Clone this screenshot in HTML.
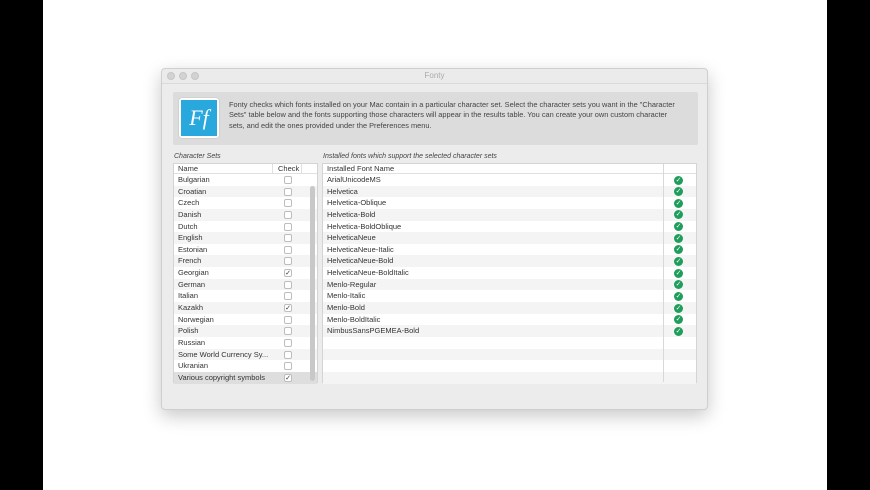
<!DOCTYPE html>
<html><head><style>
*{margin:0;padding:0;box-sizing:border-box}
body{width:870px;height:490px;background:#000;position:relative;overflow:hidden;font-family:"Liberation Sans",sans-serif;font-size:7.5px;color:#333}
#page{position:absolute;left:43px;top:0;width:784px;height:490px;background:#fff}
.win{position:absolute;left:161px;top:68px;width:547px;height:342px;background:#ececec;border:1px solid #cfcfcf;border-radius:4px;box-shadow:0 6px 18px rgba(0,0,0,.22)}
.tb{position:absolute;left:0;top:0;width:100%;height:15px;border-bottom:1px solid #dadada;background:#ebebeb;border-radius:4px 4px 0 0}
.tb .d{position:absolute;top:3px;width:8px;height:8px;border-radius:50%;background:#d2d2d2;border:1px solid #c6c6c6}
.tb .t{position:absolute;left:0;right:0;top:2px;text-align:center;color:#aaa;font-size:8px}
.info{position:absolute;left:11px;top:23px;width:525px;height:53px;background:#dcdcdc;border-radius:2px}
.icon{position:absolute;left:6px;top:6px;width:40px;height:40px;background:#fff;border-radius:3px;box-shadow:0 0 1px #999}
.icon div{position:absolute;left:2px;top:2px;width:36px;height:36px;background:#29a8dd;color:#fff;font-family:"Liberation Serif",serif;font-style:italic;font-size:22px;text-align:center;line-height:36px}
.info p{position:absolute;left:56px;top:8px;width:450px;font-size:7.4px;line-height:10.3px;color:#444}
.lbl{position:absolute;top:84px;font-style:italic;font-size:7px;color:#444}
.tbl{position:absolute;top:94px;background:#fff;border:1px solid #d4d4d4}
.row{height:11.65px;line-height:11.65px;padding-left:4px;position:relative;white-space:nowrap}
.row:nth-child(even){background:#f4f4f4}
.hdr{height:10px;line-height:10px;padding-left:4px;border-bottom:1px solid #e0e0e0;background:#fff;position:relative}
.cb{position:absolute;left:110px;top:2px;width:8px;height:8px;border:1px solid #bdbdbd;border-radius:2px;background:#fff;font-size:7px;line-height:7px;text-align:center;color:#333}
.ok{position:absolute;left:351px;top:1.5px;width:9px;height:9px;border-radius:50%;background:#1e9e5a;color:#fff;font-size:7px;line-height:9px;text-align:center}
</style></head><body>
<div id="page"></div>
<div class="win">
 <div class="tb"><div class="d" style="left:5px"></div><div class="d" style="left:17px"></div><div class="d" style="left:29px"></div><div class="t">Fonty</div></div>
 <div class="info"><div class="icon"><div>Ff</div></div>
 <p>Fonty checks which fonts installed on your Mac contain in a particular character set. Select the character sets you want in the "Character Sets" table below and the fonts supporting those characters will appear in the results table. You can create your own custom character sets, and edit the ones provided under the Preferences menu.</p></div>
 <div class="lbl" style="left:12px">Character Sets</div>
 <div class="lbl" style="left:161px">Installed fonts which support the selected character sets</div>
 <div class="tbl" style="left:11px;width:145px;height:220px">
  <div class="hdr">Name<span style="position:absolute;left:104px">Check</span><span style="position:absolute;left:127px;top:0;height:10px;border-left:1px solid #e0e0e0"></span><span style="position:absolute;left:98px;top:0;height:10px;border-left:1px solid #e0e0e0"></span></div>
  <div style="position:absolute;left:136px;top:22px;width:5px;height:195px;background:#c8c8c8;border-radius:3px;z-index:5"></div>
  <div>
  <div class="row">Bulgarian<span class="cb"></span></div>
  <div class="row">Croatian<span class="cb"></span></div>
  <div class="row">Czech<span class="cb"></span></div>
  <div class="row">Danish<span class="cb"></span></div>
  <div class="row">Dutch<span class="cb"></span></div>
  <div class="row">English<span class="cb"></span></div>
  <div class="row">Estonian<span class="cb"></span></div>
  <div class="row">French<span class="cb"></span></div>
  <div class="row">Georgian<span class="cb">✓</span></div>
  <div class="row">German<span class="cb"></span></div>
  <div class="row">Italian<span class="cb"></span></div>
  <div class="row">Kazakh<span class="cb">✓</span></div>
  <div class="row">Norwegian<span class="cb"></span></div>
  <div class="row">Polish<span class="cb"></span></div>
  <div class="row">Russian<span class="cb"></span></div>
  <div class="row">Some World Currency Sy...<span class="cb"></span></div>
  <div class="row">Ukranian<span class="cb"></span></div>
  <div class="row" style="background:#dedede">Various copyright symbols<span class="cb">✓</span></div>
  </div>
 </div>
 <div class="tbl" style="left:160px;width:375px;height:220px">
  <div class="hdr">Installed Font Name</div>
  <div style="position:absolute;left:340px;top:0;height:218px;border-left:1px solid #d8d8d8;z-index:5"></div>
  <div>
  <div class="row">ArialUnicodeMS<span class="ok">✓</span></div>
  <div class="row">Helvetica<span class="ok">✓</span></div>
  <div class="row">Helvetica-Oblique<span class="ok">✓</span></div>
  <div class="row">Helvetica-Bold<span class="ok">✓</span></div>
  <div class="row">Helvetica-BoldOblique<span class="ok">✓</span></div>
  <div class="row">HelveticaNeue<span class="ok">✓</span></div>
  <div class="row">HelveticaNeue-Italic<span class="ok">✓</span></div>
  <div class="row">HelveticaNeue-Bold<span class="ok">✓</span></div>
  <div class="row">HelveticaNeue-BoldItalic<span class="ok">✓</span></div>
  <div class="row">Menlo-Regular<span class="ok">✓</span></div>
  <div class="row">Menlo-Italic<span class="ok">✓</span></div>
  <div class="row">Menlo-Bold<span class="ok">✓</span></div>
  <div class="row">Menlo-BoldItalic<span class="ok">✓</span></div>
  <div class="row">NimbusSansPGEMEA-Bold<span class="ok">✓</span></div>
  <div class="row"></div><div class="row"></div><div class="row"></div><div class="row"></div>
  </div>
 </div>
</div>
</body></html>
